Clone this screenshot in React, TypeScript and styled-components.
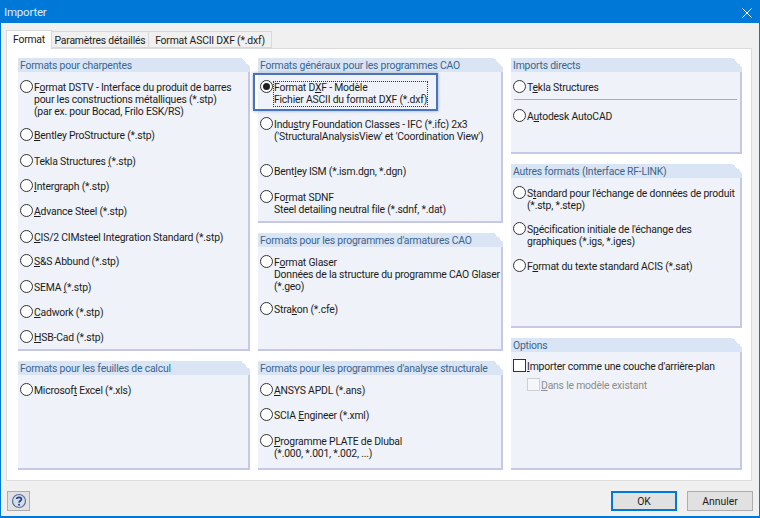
import { FC, ReactNode } from 'react';
import styled, { createGlobalStyle } from 'styled-components';

const GlobalStyle = createGlobalStyle`
  html, body {
    margin: 0;
    padding: 0;
    background: #f0f0f0;
  }
`;

const Window = styled.div`
  width: 760px;
  height: 518px;
  box-sizing: border-box;
  border: 1px solid #0078d7;
  border-bottom-width: 2px;
  background: #f0f0f0;
  font-family: Roboto, 'Liberation Sans', sans-serif;
  font-size: 10.4px;
  letter-spacing: -0.2px;
  color: #1c1c1c;
  display: flex;
  flex-direction: column;
  overflow: hidden;
`;

const TitleBar = styled.div`
  height: 22px;
  flex: none;
  background: #0078d7;
  color: #dcecf9;
  font-size: 11.5px;
  line-height: 22px;
  padding-left: 3px;
  display: flex;
  justify-content: space-between;
`;

const CloseIcon = styled.svg`
  width: 10px;
  height: 10px;
  margin: 7px 7px 0 0;
`;

const TabBar = styled.div`
  height: 18px;
  flex: none;
  margin: 7px 0 0 5px;
  display: flex;
  align-items: flex-end;
  position: relative;
  z-index: 1;
`;

const Tab = styled.div<{ $active?: boolean; $width: number }>`
  width: ${({ $width }) => $width}px;
  height: ${({ $active }) => ($active ? '19px' : '17px')};
  line-height: ${({ $active }) => ($active ? '18px' : '17px')};
  box-sizing: border-box;
  text-align: center;
  margin-bottom: ${({ $active }) => ($active ? '-1px' : '0')};
  background: ${({ $active }) => ($active ? '#fff' : '#f0f0f0')};
  border: 1px solid #d9d9d9;
  border-bottom: ${({ $active }) => ($active ? 'none' : '1px solid #d9d9d9')};
  margin-left: ${({ $active }) => ($active ? '0' : '-1px')};
  white-space: nowrap;
`;

const Panel = styled.div`
  width: 746px;
  height: 433px;
  flex: none;
  box-sizing: border-box;
  margin-left: 5px;
  background: #fff;
  border: 1px solid #dcdcdc;
  padding: 9px 7px 0 11px;
  display: flex;
  gap: 8px;
`;

const Column = styled.div<{ $width: number }>`
  width: ${({ $width }) => $width}px;
  flex: none;
  display: flex;
  flex-direction: column;
  gap: 10px;
`;

const Group = styled.section<{ $height: number }>`
  height: ${({ $height }) => $height}px;
  box-sizing: border-box;
  background: #eff3f9;
  border-right: 2px solid #c6c9e6;
  border-bottom: 2px solid #c6c9e6;
  display: flex;
  flex-direction: column;
`;

const GroupTitle = styled.div`
  height: 14px;
  flex: none;
  position: relative;
  margin-right: -2px;
  padding-left: 2px;
  background: #d9e4f4;
  color: #3a668f;
  line-height: 15px;
  white-space: nowrap;

  /* cut corner, top right */
  &::after {
    content: '';
    position: absolute;
    top: 0;
    right: 0;
    width: 9px;
    height: 9px;
    background: linear-gradient(45deg, transparent 50%, #fff 50%);
  }
`;

const GroupBody = styled.div`
  position: relative;
  padding: 9px 0 0 2px;
`;

const Row = styled.div<{ $top?: number; $disabled?: boolean; $indent?: number }>`
  display: flex;
  align-items: flex-start;
  gap: 1px;
  margin-top: ${({ $top }) => $top ?? 0}px;
  margin-left: ${({ $indent }) => $indent ?? 0}px;
  color: ${({ $disabled }) => ($disabled ? '#8c8c8c' : 'inherit')};
`;

const Label = styled.div<{ $focused?: boolean }>`
  margin: 1px 0 -1px;
  line-height: 12px;
  white-space: nowrap;
  outline: ${({ $focused }) => ($focused ? '1px dotted #333' : 'none')};
`;

const RadioCircle = styled.span<{ $checked?: boolean }>`
  width: 13px;
  height: 13px;
  flex: none;
  box-sizing: border-box;
  margin-top: -1px;
  border: 1px solid #333;
  border-radius: 50%;
  background: #fff;
  display: flex;
  align-items: center;
  justify-content: center;

  &::after {
    content: '';
    display: ${({ $checked }) => ($checked ? 'block' : 'none')};
    width: 7px;
    height: 7px;
    border-radius: 50%;
    background: #1f1f1f;
  }
`;

const CheckSquare = styled.span<{ $disabled?: boolean }>`
  width: 13px;
  height: 13px;
  flex: none;
  box-sizing: border-box;
  margin-top: -1px;
  border: 1px solid ${({ $disabled }) => ($disabled ? '#cfcfcf' : '#333')};
  background: ${({ $disabled }) => ($disabled ? '#f4f6f9' : '#fff')};
`;

const FocusFrame = styled.div`
  position: absolute;
  left: -5px;
  top: 1px;
  width: 185px;
  height: 38px;
  box-sizing: border-box;
  border: 2px solid #4a74b8;
  box-shadow: 0 0 3px rgba(60, 90, 150, 0.5);
  pointer-events: none;
`;

const Divider = styled.div`
  height: 1px;
  background: #a9acb4;
  margin: 6px 3px 0 1px;
`;

const Footer = styled.div`
  flex: 1;
  display: flex;
  align-items: flex-start;
  justify-content: space-between;
  padding: 10px 6px 0 6px;
`;

const Actions = styled.div`
  display: flex;
  gap: 10px;
`;

const Button = styled.button<{ $default?: boolean }>`
  width: 66px;
  height: 20px;
  padding: 0;
  box-sizing: border-box;
  background: #e1e1e1;
  border: ${({ $default }) => ($default ? '2px solid #0078d7' : '1px solid #adadad')};
  color: #1c1c1c;
  font-family: inherit;
  font-size: 10.4px;
`;

const HelpButton = styled.button`
  width: 23px;
  height: 20px;
  padding: 0;
  background: #e1e1e1;
  border: 1px solid #adadad;
  display: flex;
  align-items: center;
  justify-content: center;
`;

const Radio: FC<{ top?: number; checked?: boolean; focused?: boolean; children: ReactNode }> = ({ top, checked, focused, children }) => (
  <Row $top={top}>
    <RadioCircle $checked={checked} />
    <Label $focused={focused}>{children}</Label>
  </Row>
);

const App: FC = () => (
  <>
    <GlobalStyle />
    <Window>
      <TitleBar>
        Importer
        <CloseIcon viewBox="0 0 10 10">
          <path d="M0.5 0.5 L9.5 9.5 M9.5 0.5 L0.5 9.5" stroke="#fff" strokeWidth="1" fill="none" />
        </CloseIcon>
      </TitleBar>
      <TabBar>
        <Tab $active $width={46}>Format</Tab>
        <Tab $width={98}>Paramètres détaillés</Tab>
        <Tab $width={124}>Format ASCII DXF (*.dxf)</Tab>
      </TabBar>
      <Panel>
        <Column $width={232}>
          <Group $height={293}>
            <GroupTitle>Formats pour charpentes</GroupTitle>
            <GroupBody>
              <Radio>
                F<u>o</u>rmat DSTV - Interface du produit de barres<br />
                pour les constructions métalliques (*.stp)<br />
                (par ex. pour Bocad, Frilo ESK/RS)
              </Radio>
              <Radio top={12}><u>B</u>entley ProStructure (*.stp)</Radio>
              <Radio top={14}>Tekla Structures <u>(</u>*.stp)</Radio>
              <Radio top={13}><u>I</u>ntergraph (*.stp)</Radio>
              <Radio top={13}><u>A</u>dvance Steel (*.stp)</Radio>
              <Radio top={14}><u>C</u>IS/2 CIMsteel Integration Standard (*.stp)</Radio>
              <Radio top={12}><u>S</u>&amp;S Abbund (*.stp)</Radio>
              <Radio top={14}>SEMA <u>(</u>*.stp)</Radio>
              <Radio top={13}><u>C</u>adwork (*.stp)</Radio>
              <Radio top={13}><u>H</u>SB-Cad (*.stp)</Radio>
            </GroupBody>
          </Group>
          <Group $height={109}>
            <GroupTitle>Formats pour les feuilles de calcul</GroupTitle>
            <GroupBody>
              <Radio>Microsof<u>t</u> Excel (*.xls)</Radio>
            </GroupBody>
          </Group>
        </Column>
        <Column $width={245}>
          <Group $height={165}>
            <GroupTitle>Formats généraux pour les programmes CAO</GroupTitle>
            <GroupBody>
              <FocusFrame />
              <Radio checked focused>
                Format D<u>X</u>F - Modèle<br />
                Fichier ASCII du format DXF (*.dxf)
              </Radio>
              <Radio top={13}>
                Indu<u>s</u>try Foundation Classes - IFC (*.ifc) 2x3<br />
                ('StructuralAnalysisView' et 'Coordination View')
              </Radio>
              <Radio top={23}>Bent<u>l</u>ey ISM (*.ism.dgn, *.dgn)</Radio>
              <Radio top={14}>
                Fo<u>r</u>mat SDNF<br />
                Steel detailing neutral file (*.sdnf, *.dat)
              </Radio>
            </GroupBody>
          </Group>
          <Group $height={118}>
            <GroupTitle>Formats pour les programmes d'armatures CAO</GroupTitle>
            <GroupBody>
              <Radio>
                F<u>o</u>rmat Glaser<br />
                Données de la structure du programme CAO Glaser<br />
                (*.geo)
              </Radio>
              <Radio top={11}>Stra<u>k</u>on (*.cfe)</Radio>
            </GroupBody>
          </Group>
          <Group $height={109}>
            <GroupTitle>Formats pour les programmes d'analyse structurale</GroupTitle>
            <GroupBody>
              <Radio><u>A</u>NSYS APDL (*.ans)</Radio>
              <Radio top={13}>SCIA <u>E</u>ngineer (*.xml)</Radio>
              <Radio top={14}>
                <u>P</u>rogramme PLATE de Dlubal<br />
                (*.000, *.001, *.002, ...)
              </Radio>
            </GroupBody>
          </Group>
        </Column>
        <Column $width={231}>
          <Group $height={96}>
            <GroupTitle>Imports directs</GroupTitle>
            <GroupBody>
              <Radio>T<u>e</u>kla Structures</Radio>
              <Divider />
              <Radio top={10}>A<u>u</u>todesk AutoCAD</Radio>
            </GroupBody>
          </Group>
          <Group $height={164}>
            <GroupTitle>Autres formats (Interface RF-LINK)</GroupTitle>
            <GroupBody>
              <Radio>
                S<u>t</u>andard pour l'échange de données de produit<br />
                (*.stp, *.step)
              </Radio>
              <Radio top={12}>
                S<u>p</u>écification initiale de l'échange des<br />
                graphiques (*.igs, *.iges)
              </Radio>
              <Radio top={13}>F<u>o</u>rmat du texte standard ACIS (*.sat)</Radio>
            </GroupBody>
          </Group>
          <Group $height={132}>
            <GroupTitle>Options</GroupTitle>
            <GroupBody>
              <Row $top={-1}>
                <CheckSquare />
                <Label><u>I</u>mporter comme une couche d'arrière-plan</Label>
              </Row>
              <Row $top={7} $indent={14} $disabled>
                <CheckSquare $disabled />
                <Label><u>D</u>ans le modèle existant</Label>
              </Row>
            </GroupBody>
          </Group>
        </Column>
      </Panel>
      <Footer>
        <HelpButton aria-label="Aide">
          <svg width="16" height="16" viewBox="0 0 16 16">
            <ellipse cx="8" cy="8" rx="6.5" ry="6.5" fill="#d5dcec" stroke="#5a6f9c" strokeWidth="1.2" />
            <path d="M5.6 6 C5.8 3.9 10.6 3.6 10.4 6.2 C10.3 7.8 8.2 7.8 8 9.6" fill="none" stroke="#1f3f86" strokeWidth="1.7" />
            <circle cx="8" cy="11.8" r="1" fill="#1f3f86" />
          </svg>
        </HelpButton>
        <Actions>
          <Button $default>OK</Button>
          <Button>Annuler</Button>
        </Actions>
      </Footer>
    </Window>
  </>
);

export default App;
